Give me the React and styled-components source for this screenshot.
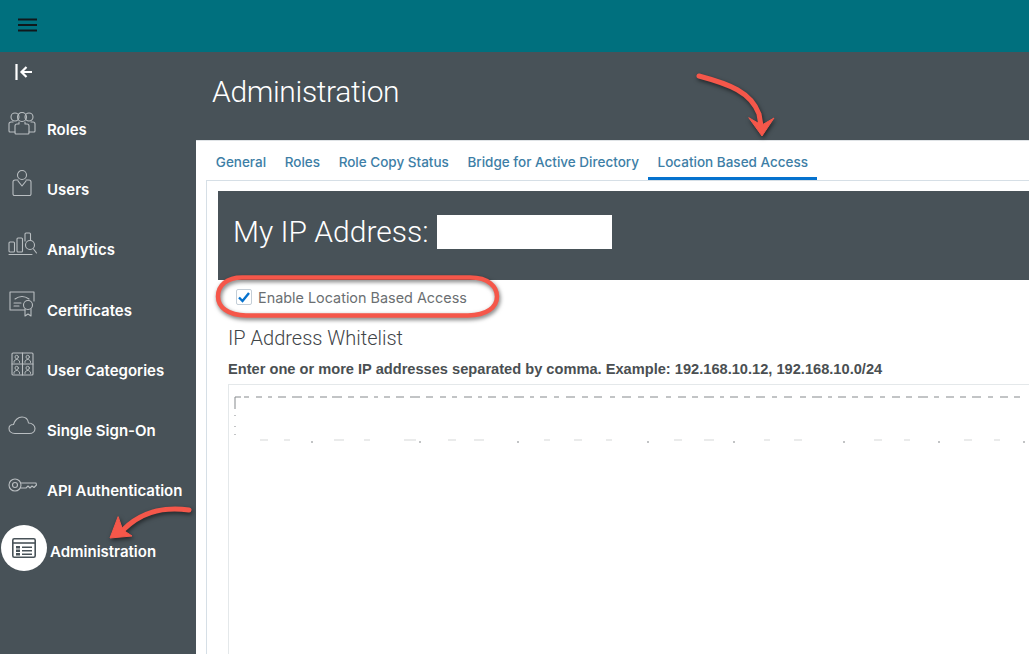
import React from 'react'
import styled, { createGlobalStyle } from 'styled-components'

const GlobalStyle = createGlobalStyle`
  html, body { margin: 0; padding: 0; height: 100%; overflow: hidden; }
  body { font-family: "Inter", "Liberation Sans", sans-serif; background: #485258; }
  * { box-sizing: border-box; }
`

const Page = styled.div`
  position: relative;
  width: 1029px;
  height: 654px;
  overflow: hidden;
  display: flex;
  flex-direction: column;
`

const TopBar = styled.header`
  height: 52px;
  flex: none;
  background: #00707e;
  display: flex;
  align-items: center;
  padding: 0 0 2px 18px;
`

const Body = styled.div`
  flex: 1;
  display: flex;
  min-height: 0;
  background: #485258;
`

const Sidebar = styled.nav`
  width: 196px;
  flex: none;
  display: flex;
  flex-direction: column;
`

const Collapse = styled.div`
  height: 47px;
  display: flex;
  align-items: center;
  padding: 0 0 8px 15px;
`

const NavRow = styled.div`
  height: 60.3px;
  flex: none;
  display: flex;
  align-items: center;
  color: #fff;
  font-size: 15px;
  font-weight: 600;
  white-space: nowrap;
`

const NavIcon = styled.span`
  width: 47px;
  flex: none;
  display: flex;
  justify-content: center;
  padding-right: 3px;
  margin-top: -12px;
`

const ActiveIcon = styled.span`
  width: 46px;
  height: 46px;
  margin: -7px 3px 0 1px;
  flex: none;
  border-radius: 50%;
  background: #fff;
  display: flex;
  align-items: center;
  justify-content: center;
`

const Main = styled.main`
  flex: 1;
  min-width: 0;
  display: flex;
  flex-direction: column;
`

const PageTitle = styled.h1`
  height: 88px;
  flex: none;
  margin: 0;
  padding: 21px 0 0 16px;
  font-family: "Roboto", "Liberation Sans", sans-serif;
  font-size: 30px;
  line-height: 38px;
  letter-spacing: -0.35px;
  font-weight: 300;
  color: #fff;
`

const Content = styled.section`
  flex: 1;
  background: #fff;
  border-top: 1px solid #dfe3e6;
  padding-left: 10px;
  display: flex;
  flex-direction: column;
`

const Tabs = styled.div`
  height: 39px;
  flex: none;
  display: flex;
  margin-left: 0.5px;
`

const Tab = styled.div`
  height: 39px;
  padding: 13px 9.3px 0;
  font-size: 13.5px;
  line-height: 16px;
  font-weight: 500;
  color: #3d7ea6;
  white-space: nowrap;
  border-bottom: 3px solid ${p => (p.$active ? '#0572ce' : 'transparent')};
`

const Panel = styled.div`
  flex: 1;
  border-top: 1px solid #d6dfe6;
  border-left: 1px solid #d6dfe6;
  padding: 10px 0 0 11px;
  display: flex;
  flex-direction: column;
`

const Banner = styled.div`
  height: 89px;
  flex: none;
  background: #485258;
  display: flex;
  align-items: center;
  padding: 0 0 8px 15px;
`

const BannerText = styled.span`
  font-family: "Roboto", "Liberation Sans", sans-serif;
  font-size: 30px;
  font-weight: 300;
  color: #fff;
`

const Redacted = styled.span`
  width: 175px;
  height: 34px;
  margin: 1px 0 0 9px;
  background: #fff;
`

const CheckRow = styled.label`
  height: 34px;
  flex: none;
  display: flex;
  align-items: center;
  padding-left: 18px;
  font-size: 14.4px;
  color: #6b6f72;
`

const CheckBox = styled.span`
  width: 16px;
  height: 16px;
  margin-right: 6px;
  border: 1px solid #c4ced7;
  border-radius: 2px;
  background: #fff;
  display: flex;
  align-items: center;
  justify-content: center;
`

const Form = styled.div`
  flex: 1;
  min-height: 0;
  padding-left: 10px;
  display: flex;
  flex-direction: column;
`

const SectionTitle = styled.h2`
  margin: 11px 0 0;
  font-family: "Roboto", "Liberation Sans", sans-serif;
  font-size: 20px;
  line-height: 26px;
  font-weight: 300;
  color: #3f4548;
`

const Hint = styled.div`
  margin-top: 9px;
  font-family: "Liberation Sans", Arial, sans-serif;
  font-size: 14.64px;
  line-height: 18px;
  font-weight: 700;
  color: #4a4f52;
  white-space: nowrap;
`

const AddressBox = styled.div`
  flex: 1;
  margin-top: 6px;
  border-top: 1px solid #e4e8ea;
  border-left: 1px solid #e4e8ea;
  padding: 10px 0 0 5px;
`

const Annotation = styled.svg`
  position: absolute;
  left: 0;
  top: 0;
  pointer-events: none;
  filter: drop-shadow(1px 2px 2px rgba(0, 0, 0, 0.55));
`

const ic = { fill: 'none', stroke: '#b9bec1', strokeWidth: 1.1, strokeLinecap: 'round', strokeLinejoin: 'round' }

const RolesIcon = () => (
  <svg width="28" height="24" viewBox="0 0 28 24" {...ic}>
    <circle cx="7" cy="6" r="4" />
    <circle cx="21" cy="6" r="4" />
    <circle cx="14" cy="6" r="4.5" />
    <path d="M5 11H3a2 2 0 0 0-2 2v7a1 1 0 0 0 1 1h5" />
    <path d="M23 11h2a2 2 0 0 1 2 2v7a1 1 0 0 1-1 1h-5" />
    <path d="M11 11v2H9a2 2 0 0 0-2 2v7a1 1 0 0 0 1 1h12a1 1 0 0 0 1-1v-7a2 2 0 0 0-2-2h-2v-2" />
  </svg>
)

const UsersIcon = () => (
  <svg width="20" height="28" viewBox="0 0 20 28" {...ic}>
    <circle cx="10" cy="6" r="4.5" />
    <path d="M6 11H3a2 2 0 0 0-2 2v12a1.5 1.5 0 0 0 1.5 1.5h15A1.5 1.5 0 0 0 19 25V13a2 2 0 0 0-2-2h-3" />
    <path d="M6 12l4 5 4-5" />
  </svg>
)

const AnalyticsIcon = () => (
  <svg width="29" height="24" viewBox="0 0 29 24" {...ic}>
    <rect x="1" y="10" width="5.5" height="10" rx="1" />
    <rect x="9" y="6" width="5.5" height="14" rx="1" />
    <path d="M17 9V2a1 1 0 0 1 1-1h3.5a1 1 0 0 1 1 1v6" />
    <circle cx="22" cy="13" r="4.5" />
    <path d="M25.5 17l3 4M1 22.500h23" />
  </svg>
)

const CertificateIcon = () => (
  <svg width="27" height="26" viewBox="0 0 27 26" {...ic}>
    <path d="M16 19H1V1h24v9" />
    <path d="M6 8q7-5 14 0M5 12h7M5 15h5" />
    <circle cx="19" cy="14" r="4.500" />
    <path d="M16 18v7l3-2 3 2v-7" />
  </svg>
)

const CategoriesIcon = () => (
  <svg width="23" height="24" viewBox="0 0 23 24" {...ic}>
    <rect x="1" y="1" width="21" height="22" rx="1" />
    <path d="M1 12h21M11.500 1v22" />
    <g strokeWidth="0.9">
      <path d="M3 10.500v-1.500l2-1.500 1.500 0 2 1.500v1.500M14 10.500v-1.500l2-1.500 1.500 0 2 1.500v1.500M3 21.500v-1.500l2-1.500 1.500 0 2 1.500v1.500M14 21.500v-1.500l2-1.500 1.500 0 2 1.500v1.500" />
      <circle cx="5.700" cy="5" r="1.700" />
      <circle cx="16.700" cy="5" r="1.700" />
      <circle cx="5.700" cy="16" r="1.700" />
      <circle cx="16.700" cy="16" r="1.700" />
    </g>
  </svg>
)

const CloudIcon = () => (
  <svg width="28" height="20" viewBox="0 0 28 20" {...ic}>
    <path d="M7 18.500C3 18.500 1 16 1 13.500 1 11 3 9.500 5.500 9.500 6.500 5.500 10 2 14 2c3.500 0 6 2.500 6.500 6 3.500 0 6.500 2.500 6.500 5.500 0 3-2.500 5-5.500 5z" />
  </svg>
)

const KeyIcon = () => (
  <svg width="29" height="14" viewBox="0 0 29 14" {...ic}>
    <circle cx="7" cy="7" r="6" />
    <circle cx="7" cy="7" r="2.500" />
    <path d="M13 5h15l0.500 2-2.500 2.500-2-1.500-2 2-2-2-2 2h-5" />
  </svg>
)

const AdminIcon = () => (
  <svg width="24" height="20" viewBox="0 0 24 20">
    <rect x="0.800" y="0.800" width="22.400" height="18.400" rx="1.500" fill="none" stroke="#485258" strokeWidth="1.600" />
    <path d="M1 5h22" stroke="#485258" strokeWidth="1.600" />
    <path d="M4 8h4v2.500H4zM4 11.500h4V14H4zM4 15h4v2.500H4zM10 8.500h10v1.500H10zM10 12h10v1.500H10zM10 15.500h10V17H10z" fill="#485258" />
  </svg>
)

const navItems = [
  { label: 'Roles', icon: <RolesIcon /> },
  { label: 'Users', icon: <UsersIcon /> },
  { label: 'Analytics', icon: <AnalyticsIcon /> },
  { label: 'Certificates', icon: <CertificateIcon /> },
  { label: 'User Categories', icon: <CategoriesIcon /> },
  { label: 'Single Sign-On', icon: <CloudIcon /> },
  { label: 'API Authentication', icon: <KeyIcon /> },
]

const tabs = ['General', 'Roles', 'Role Copy Status', 'Bridge for Active Directory', 'Location Based Access']

const App = () => {
  return (
    <Page>
      <GlobalStyle />
      <TopBar>
        <svg width="20" height="14" viewBox="0 0 20 14" stroke="#10181c" strokeWidth="1.800">
          <path d="M0 1.500h19M0 7h19M0 12.500h19" />
        </svg>
      </TopBar>
      <Body>
        <Sidebar>
          <Collapse>
            <svg width="18" height="16" viewBox="0 0 18 16" fill="none" stroke="#fff" strokeWidth="2.200">
              <path d="M1.500 0v16M17 8H6.500M11.500 3l-5 5 5 5" />
            </svg>
          </Collapse>
          {navItems.map(item => (
            <NavRow key={item.label}>
              <NavIcon>{item.icon}</NavIcon>
              {item.label}
            </NavRow>
          ))}
          <NavRow>
            <ActiveIcon><AdminIcon /></ActiveIcon>
            Administration
          </NavRow>
        </Sidebar>
        <Main>
          <PageTitle>Administration</PageTitle>
          <Content>
            <Tabs>
              {tabs.map((t, i) => (
                <Tab key={t} $active={i === tabs.length - 1}>{t}</Tab>
              ))}
            </Tabs>
            <Panel>
              <Banner>
                <BannerText>My IP Address:</BannerText>
                <Redacted />
              </Banner>
              <CheckRow>
                <CheckBox>
                  <svg width="12" height="11" viewBox="0 0 12 11" fill="none" stroke="#0572ce" strokeWidth="2.400">
                    <path d="M1 5.500l3.500 3.500L11 1" />
                  </svg>
                </CheckBox>
                Enable Location Based Access
              </CheckRow>
              <Form>
                <SectionTitle>IP Address Whitelist</SectionTitle>
                <Hint>Enter one or more IP addresses separated by comma. Example: 192.168.10.12, 192.168.10.0/24</Hint>
                <AddressBox>
                  {/* what is left of the scrubbed address list */}
                  <svg width="796" height="50" viewBox="0 0 796 50" stroke="#85898c" strokeWidth="1" fill="none">
                    <path d="M1 2v12M1 2h6M10 2h5M22 2h6M34 2h4M44 2h8M58 2h10M74 2h6M86 2h7M98 2h10M114 2h6M126 2h8M140 2h4M150 2h6M162 2h8M176 2h10M192 2h7M206 2h6M218 2h5M230 2h8M244 2h4M254 2h8M268 2h6M280 2h10M296 2h4M306 2h7M320 2h5M332 2h9M348 2h6M360 2h8M376 2h5M388 2h9M404 2h6M416 2h8M432 2h5M444 2h8M458 2h6M470 2h10M486 2h4M496 2h8M510 2h6M522 2h9M538 2h5M550 2h8M566 2h6M578 2h10M594 2h4M604 2h8M618 2h6M630 2h9M646 2h5M658 2h8M672 2h6M684 2h10M700 2h5M712 2h8M726 2h6M738 2h9M754 2h5M766 2h8M780 2h6" />
                    <path d="M1 20v1M1 31v1M1 39v1" />
                    <path d="M78 46v2M186 46v2M284 46v2M414 46v2M500 46v2M610 46v2M705 46v2M790 46v2" />
                    <path d="M26 45h8M50 45h6M100 45h10M130 45h6M170 45h12M214 45h8M240 45h10M310 45h6M340 45h8M372 45h6M440 45h8M470 45h10M530 45h6M560 45h8M640 45h8M670 45h6M730 45h8M760 45h6" opacity="0.35" />
                  </svg>
                </AddressBox>
              </Form>
            </Panel>
          </Content>
        </Main>
      </Body>
      <Annotation width="1029" height="654" viewBox="0 0 1029 654" fill="none" stroke="#f5574a" strokeLinecap="round">
        <path d="M242 277.500H470C489 277.500 497 287 497 296.500 497 307 487 315.500 468 315.500H246C228 315.500 218 307 218 296.500 218 285 227 277.500 242 277.500z" strokeWidth="4.500" />
        <path d="M699 76c30 8 52 16 60 38l2 12" strokeWidth="5" />
        <path d="M749 118l13 18 12-18-12 7z" fill="#f5574a" stroke="#f5574a" strokeWidth="1" strokeLinejoin="round" />
        <path d="M189 510c-30-4-50 4-66 20" strokeWidth="5" />
        <path d="M118 517l-8 21 22-2-9-6z" fill="#f5574a" stroke="#f5574a" strokeWidth="1" strokeLinejoin="round" />
      </Annotation>
    </Page>
  )
}

export default App
